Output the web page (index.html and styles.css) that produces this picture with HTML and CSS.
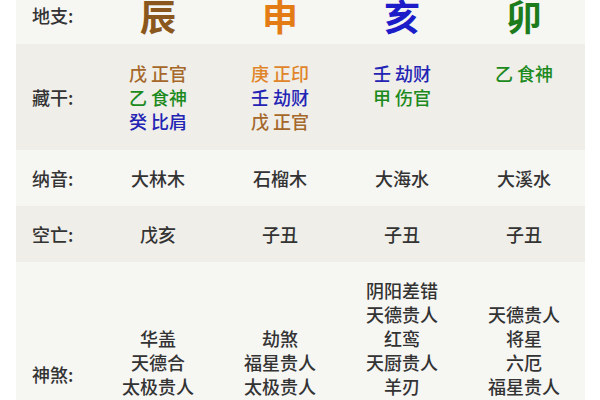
FILE: index.html
```html
<!DOCTYPE html>
<html lang="zh-CN">
<head>
<meta charset="utf-8">
<link rel="stylesheet" href="styles.css">
</head>
<body>
<div class="page">
<table class="bazi">
  <colgroup>
    <col class="c-label"><col class="c-col"><col class="c-col"><col class="c-col"><col class="c-col">
  </colgroup>
  <tr class="row light branch">
    <th>地支:</th>
    <td><span class="big brown">辰</span></td>
    <td><span class="big orange">申</span></td>
    <td><span class="big blue">亥</span></td>
    <td><span class="big green">卯</span></td>
  </tr>
  <tr class="row dark hidden-stems">
    <th>藏干:</th>
    <td><div class="brown2">戊 正官</div><div class="green2">乙 食神</div><div class="blue2">癸 比肩</div></td>
    <td><div class="orange2">庚 正印</div><div class="blue2">壬 劫财</div><div class="brown2">戊 正官</div></td>
    <td class="top"><div class="blue2">壬 劫财</div><div class="green2">甲 伤官</div></td>
    <td class="top"><div class="green2">乙 食神</div></td>
  </tr>
  <tr class="row light single">
    <th>纳音:</th>
    <td>大林木</td><td>石榴木</td><td>大海水</td><td>大溪水</td>
  </tr>
  <tr class="row dark single">
    <th>空亡:</th>
    <td>戊亥</td><td>子丑</td><td>子丑</td><td>子丑</td>
  </tr>
  <tr class="row light gods">
    <th>神煞:</th>
    <td><div>华盖</div><div>天德合</div><div>太极贵人</div><div>月德合</div></td>
    <td><div>劫煞</div><div>福星贵人</div><div>太极贵人</div><div>亡神</div></td>
    <td><div>阴阳差错</div><div>天德贵人</div><div>红鸾</div><div>天厨贵人</div><div>羊刃</div><div>月德贵人</div><div>文昌贵人</div><div>孤辰</div></td>
    <td><div>天德贵人</div><div>将星</div><div>六厄</div><div>福星贵人</div><div>桃花</div><div>国印贵人</div></td>
  </tr>
</table>
</div>
</body>
</html>
```
FILE: styles.css
```css
html, body {
  margin: 0;
  padding: 0;
  background: #ffffff;
}
.page {
  padding: 0 15px 0 16px;
  margin-top: -14px;
  font-family: "Noto Sans CJK SC", "Noto Sans", sans-serif;
  color: #333333;
}
.bazi {
  width: 569px;
  border-collapse: collapse;
  table-layout: fixed;
}
.c-label { width: 81px; }
.c-col { width: 122px; }
.row th, .row td {
  font-size: 18px;
  line-height: 24px;
  font-weight: 500;
  vertical-align: middle;
  padding: 0;
}
.row th {
  text-align: left;
  padding-left: 16px;
  color: #333333;
}
.row td { text-align: center; }
.light { background: #f6f6f3; }
.dark { background: #efeee9; }

.branch th, .branch td { padding-top: 8px; padding-bottom: 8px; }
.big {
  display: inline-block;
  font-size: 36px;
  line-height: 42px;
  font-weight: 600;
}
.hidden-stems th, .hidden-stems td { padding-top: 17px; padding-bottom: 17px; }
.hidden-stems td.top { vertical-align: top; }
.single th, .single td { padding-top: 16px; padding-bottom: 16px; }
.gods th, .gods td { padding-top: 16px; padding-bottom: 16px; }

.brown { color: #8a571c; }
.orange { color: #e47c16; }
.blue { color: #1c1cc8; }
.green { color: #1c7c1c; }
.brown2 { color: #a5672a; }
.orange2 { color: #e0852a; }
.blue2 { color: #2424b4; }
.green2 { color: #1d8a1d; }
```
